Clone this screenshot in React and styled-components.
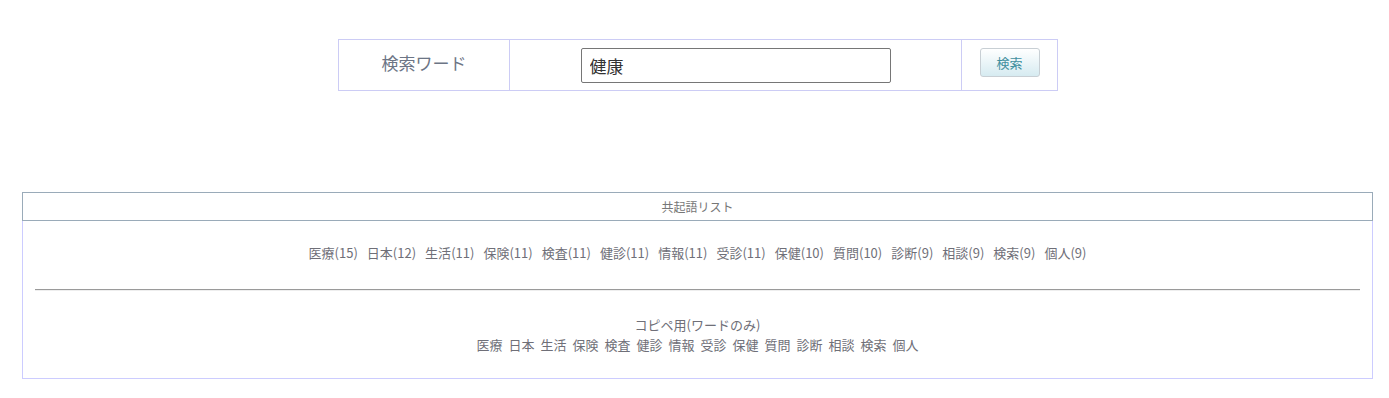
import React from 'react';
import styled, { createGlobalStyle } from 'styled-components';

const words = [
  ['医療', 15], ['日本', 12], ['生活', 11], ['保険', 11], ['検査', 11],
  ['健診', 11], ['情報', 11], ['受診', 11], ['保健', 10], ['質問', 10],
  ['診断', 9], ['相談', 9], ['検索', 9], ['個人', 9]
];

export default function App() {
  return (
    <>
      <GlobalStyle />
      <SearchTable>
        <LabelCell>検索ワード</LabelCell>
        <InputCell>
          <SearchInput defaultValue="健康" />
        </InputCell>
        <ButtonCell>
          <SearchButton>検索</SearchButton>
        </ButtonCell>
      </SearchTable>

      <ListBox>
        <ListHeader>共起語リスト</ListHeader>
        <ListBody>
          <WordRow>
            {words.map(([w, n]) => (
              <Word key={w}>{w}({n})</Word>
            ))}
          </WordRow>
          <Rule />
          <CopyTitle>コピペ用(ワードのみ)</CopyTitle>
          <WordRow $tight>
            {words.map(([w]) => (
              <Word key={w}>{w}</Word>
            ))}
          </WordRow>
        </ListBody>
      </ListBox>
    </>
  );
}

const GlobalStyle = createGlobalStyle`
  body {
    margin: 0;
    background: #ffffff;
    font-family: "Noto Sans CJK JP", "Noto Sans", sans-serif;
    color: #666;
  }
`;

const SearchTable = styled.div`
  display: grid;
  grid-template-columns: 170px 452px 96px;
  width: 720px;
  height: 52px;
  margin: 39px 0 0 338px;
  border: 1px solid #ccccf5;
  box-sizing: border-box;
`;

const Cell = styled.div`
  display: flex;
  align-items: center;
  justify-content: center;
  border-left: 1px solid #ccccf5;
  &:first-child {
    border-left: none;
  }
`;

const LabelCell = styled(Cell)`
  font-size: 17px;
  color: #6c7585;
  padding-bottom: 5px;
`;

const InputCell = styled(Cell)`
  padding-top: 1px;
`;

const ButtonCell = styled(Cell)`
  padding-bottom: 5px;
`;

const SearchInput = styled.input`
  width: 310px;
  height: 35px;
  box-sizing: border-box;
  border: 1px solid #767676;
  border-radius: 2px;
  padding: 0 8px;
  font-family: "Noto Sans CJK JP", sans-serif;
  font-size: 17px;
  color: #333;
  outline: none;
`;

const SearchButton = styled.button`
  width: 60px;
  height: 29px;
  border: 1px solid #c8cfd4;
  border-radius: 3px;
  background: linear-gradient(#ffffff, #d6ebf1);
  color: #3f8f9e;
  font-family: "Noto Sans CJK JP", sans-serif;
  font-size: 13px;
  padding: 0;
`;

const ListBox = styled.div`
  margin: 101px 16px 0 22px;
`;

const ListHeader = styled.div`
  height: 29px;
  box-sizing: border-box;
  border: 1px solid #9aabb9;
  display: flex;
  align-items: center;
  justify-content: center;
  font-size: 12px;
  color: #777;
`;

const ListBody = styled.div`
  border: 1px solid #ccccff;
  border-top: none;
  padding: 22px 12px 23px;
  text-align: center;
`;

const WordRow = styled.div`
  display: flex;
  justify-content: center;
  flex-wrap: wrap;
  gap: ${p => (p.$tight ? '6px' : '9px')};
  font-size: 13px;
  line-height: 20px;
  color: #6f6f78;
`;

const Word = styled.span``;

const Rule = styled.div`
  margin: 26px 0 24px;
  height: 1px;
  background: #9a9a9a;
  border-bottom: 1px solid #eeeeee;
`;

const CopyTitle = styled.div`
  font-size: 13px;
  line-height: 20px;
  color: #6f6f78;
`;
